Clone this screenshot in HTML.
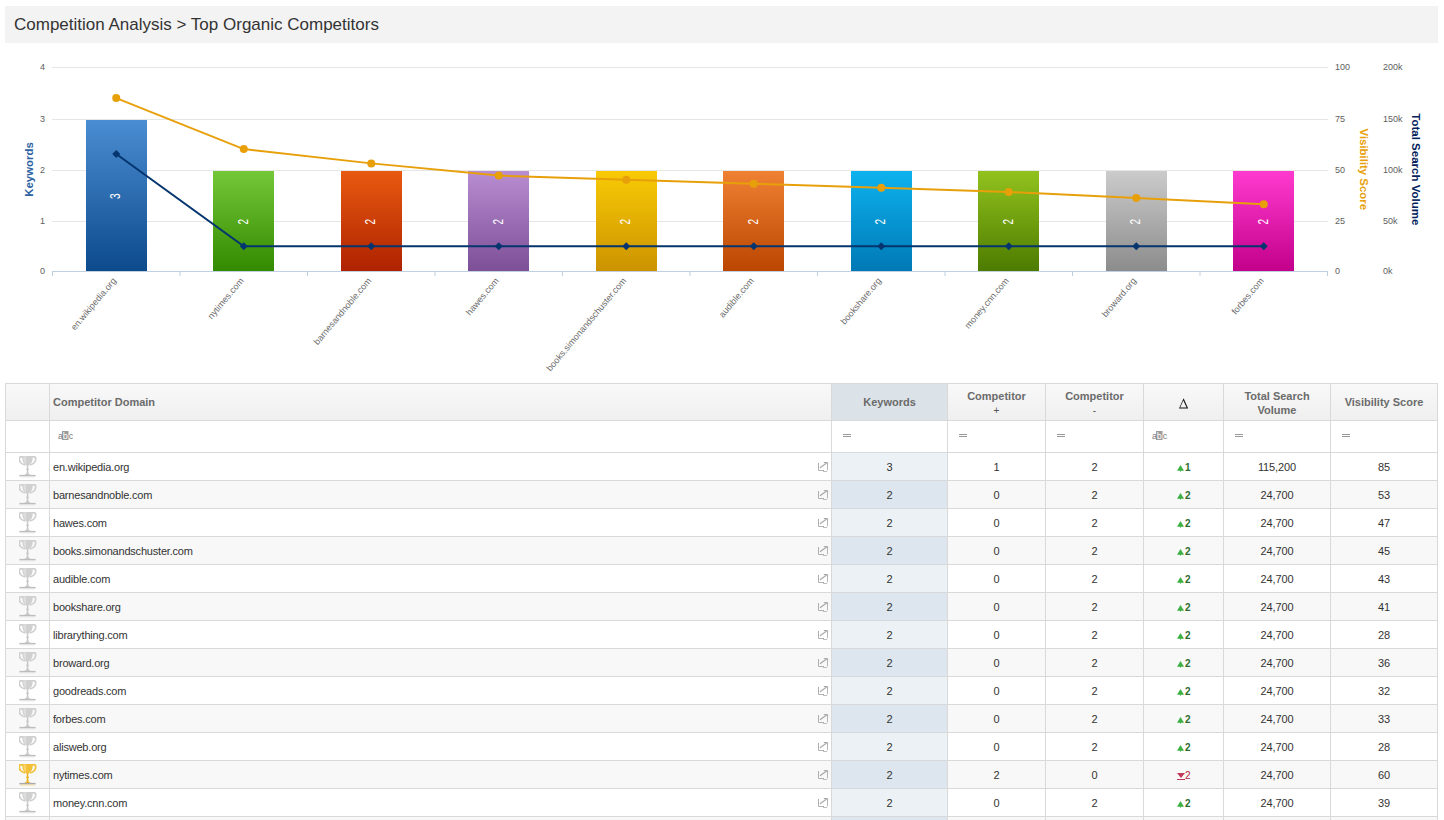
<!DOCTYPE html>
<html><head><meta charset="utf-8"><style>
html,body{margin:0;padding:0;background:#fff;width:1444px;height:820px;overflow:hidden;position:relative;font-family:"Liberation Sans",sans-serif}
svg text{font-family:"Liberation Sans",sans-serif}
</style></head><body>
<div style="position:absolute;left:5px;top:6px;width:1433px;height:37px;background:#f3f3f3"></div>
<div style="position:absolute;left:14px;top:15px;font-size:17px;color:#333;line-height:20px;white-space:nowrap">Competition Analysis &gt; Top Organic Competitors</div>
<svg width="1444" height="380" viewBox="0 0 1444 380" style="position:absolute;left:0;top:0">
<defs>
<linearGradient id="g0" x1="0" y1="0" x2="0" y2="1"><stop offset="0" stop-color="#4b8dd2"/><stop offset="1" stop-color="#0c4a8c"/></linearGradient>
<linearGradient id="g1" x1="0" y1="0" x2="0" y2="1"><stop offset="0" stop-color="#74c738"/><stop offset="1" stop-color="#338a00"/></linearGradient>
<linearGradient id="g2" x1="0" y1="0" x2="0" y2="1"><stop offset="0" stop-color="#e85a10"/><stop offset="1" stop-color="#ae2200"/></linearGradient>
<linearGradient id="g3" x1="0" y1="0" x2="0" y2="1"><stop offset="0" stop-color="#b98dd2"/><stop offset="1" stop-color="#7c4f96"/></linearGradient>
<linearGradient id="g4" x1="0" y1="0" x2="0" y2="1"><stop offset="0" stop-color="#f8ca06"/><stop offset="1" stop-color="#cc9300"/></linearGradient>
<linearGradient id="g5" x1="0" y1="0" x2="0" y2="1"><stop offset="0" stop-color="#ef8133"/><stop offset="1" stop-color="#bb4600"/></linearGradient>
<linearGradient id="g6" x1="0" y1="0" x2="0" y2="1"><stop offset="0" stop-color="#0db2ee"/><stop offset="1" stop-color="#0079b6"/></linearGradient>
<linearGradient id="g7" x1="0" y1="0" x2="0" y2="1"><stop offset="0" stop-color="#92c21e"/><stop offset="1" stop-color="#4d7b00"/></linearGradient>
<linearGradient id="g8" x1="0" y1="0" x2="0" y2="1"><stop offset="0" stop-color="#cbcbcb"/><stop offset="1" stop-color="#8c8c8c"/></linearGradient>
<linearGradient id="g9" x1="0" y1="0" x2="0" y2="1"><stop offset="0" stop-color="#ff3bcf"/><stop offset="1" stop-color="#c2008a"/></linearGradient>
</defs>
<rect x="52" y="67.0" width="1276" height="1" fill="#e6e6e6"/>
<rect x="52" y="119.0" width="1276" height="1" fill="#e6e6e6"/>
<rect x="52" y="170.0" width="1276" height="1" fill="#e6e6e6"/>
<rect x="52" y="221.0" width="1276" height="1" fill="#e6e6e6"/>
<text x="45" y="69.7" text-anchor="end" font-size="9" fill="#606060">4</text>
<text x="45" y="121.7" text-anchor="end" font-size="9" fill="#606060">3</text>
<text x="45" y="172.7" text-anchor="end" font-size="9" fill="#606060">2</text>
<text x="45" y="223.7" text-anchor="end" font-size="9" fill="#606060">1</text>
<text x="45" y="273.7" text-anchor="end" font-size="9" fill="#606060">0</text>
<text x="1335" y="69.7" font-size="9" fill="#606060">100</text>
<text x="1335" y="121.7" font-size="9" fill="#606060">75</text>
<text x="1335" y="172.7" font-size="9" fill="#606060">50</text>
<text x="1335" y="223.7" font-size="9" fill="#606060">25</text>
<text x="1335" y="273.7" font-size="9" fill="#606060">0</text>
<text x="1383" y="69.7" font-size="9" fill="#606060">200k</text>
<text x="1383" y="121.7" font-size="9" fill="#606060">150k</text>
<text x="1383" y="172.7" font-size="9" fill="#606060">100k</text>
<text x="1383" y="223.7" font-size="9" fill="#606060">50k</text>
<text x="1383" y="273.7" font-size="9" fill="#606060">0k</text>
<text transform="translate(33,169.5) rotate(-90)" text-anchor="middle" font-size="11.4" font-weight="bold" fill="#2c62a3">Keywords</text>
<text transform="translate(1359.5,169.3) rotate(90)" text-anchor="middle" font-size="11.4" font-weight="bold" fill="#e8a00a">Visibility Score</text>
<text transform="translate(1412,169.3) rotate(90)" text-anchor="middle" font-size="11.5" font-weight="bold" fill="#03225c">Total Search Volume</text>
<rect x="86" y="120" width="61" height="151" fill="url(#g0)"/>
<rect x="213" y="171" width="61" height="100" fill="url(#g1)"/>
<rect x="341" y="171" width="61" height="100" fill="url(#g2)"/>
<rect x="468" y="171" width="61" height="100" fill="url(#g3)"/>
<rect x="596" y="171" width="61" height="100" fill="url(#g4)"/>
<rect x="723" y="171" width="61" height="100" fill="url(#g5)"/>
<rect x="851" y="171" width="61" height="100" fill="url(#g6)"/>
<rect x="978" y="171" width="61" height="100" fill="url(#g7)"/>
<rect x="1106" y="171" width="61" height="100" fill="url(#g8)"/>
<rect x="1233" y="171" width="61" height="100" fill="url(#g9)"/>
<rect x="52" y="271" width="1276" height="1" fill="#c0d0e0"/>
<rect x="52.00" y="271" width="1" height="5" fill="#c0d0e0"/>
<rect x="179.50" y="271" width="1" height="5" fill="#c0d0e0"/>
<rect x="307.00" y="271" width="1" height="5" fill="#c0d0e0"/>
<rect x="434.50" y="271" width="1" height="5" fill="#c0d0e0"/>
<rect x="562.00" y="271" width="1" height="5" fill="#c0d0e0"/>
<rect x="689.50" y="271" width="1" height="5" fill="#c0d0e0"/>
<rect x="817.00" y="271" width="1" height="5" fill="#c0d0e0"/>
<rect x="944.50" y="271" width="1" height="5" fill="#c0d0e0"/>
<rect x="1072.00" y="271" width="1" height="5" fill="#c0d0e0"/>
<rect x="1199.50" y="271" width="1" height="5" fill="#c0d0e0"/>
<rect x="1327.00" y="271" width="1" height="5" fill="#c0d0e0"/>
<text transform="translate(120.25,196.2) rotate(-90) scale(0.72,1)" text-anchor="middle" font-size="14" fill="#ffffff">3</text>
<text transform="translate(247.75,221.7) rotate(-90) scale(0.72,1)" text-anchor="middle" font-size="14" fill="#ffffff">2</text>
<text transform="translate(375.25,221.7) rotate(-90) scale(0.72,1)" text-anchor="middle" font-size="14" fill="#ffffff">2</text>
<text transform="translate(502.75,221.7) rotate(-90) scale(0.72,1)" text-anchor="middle" font-size="14" fill="#ffffff">2</text>
<text transform="translate(630.25,221.7) rotate(-90) scale(0.72,1)" text-anchor="middle" font-size="14" fill="#ffffff">2</text>
<text transform="translate(757.75,221.7) rotate(-90) scale(0.72,1)" text-anchor="middle" font-size="14" fill="#ffffff">2</text>
<text transform="translate(885.25,221.7) rotate(-90) scale(0.72,1)" text-anchor="middle" font-size="14" fill="#ffffff">2</text>
<text transform="translate(1012.75,221.7) rotate(-90) scale(0.72,1)" text-anchor="middle" font-size="14" fill="#ffffff">2</text>
<text transform="translate(1140.25,221.7) rotate(-90) scale(0.72,1)" text-anchor="middle" font-size="14" fill="#ffffff">2</text>
<text transform="translate(1267.75,221.7) rotate(-90) scale(0.72,1)" text-anchor="middle" font-size="14" fill="#ffffff">2</text>
<text transform="translate(116.75,281) rotate(-50)" text-anchor="end" font-size="9" fill="#6a6a6a">en.wikipedia.org</text>
<text transform="translate(244.25,281) rotate(-50)" text-anchor="end" font-size="9" fill="#6a6a6a">nytimes.com</text>
<text transform="translate(371.75,281) rotate(-50)" text-anchor="end" font-size="9" fill="#6a6a6a">barnesandnoble.com</text>
<text transform="translate(499.25,281) rotate(-50)" text-anchor="end" font-size="9" fill="#6a6a6a">hawes.com</text>
<text transform="translate(626.75,281) rotate(-50)" text-anchor="end" font-size="9" fill="#6a6a6a">books.simonandschuster.com</text>
<text transform="translate(754.25,281) rotate(-50)" text-anchor="end" font-size="9" fill="#6a6a6a">audible.com</text>
<text transform="translate(881.75,281) rotate(-50)" text-anchor="end" font-size="9" fill="#6a6a6a">bookshare.org</text>
<text transform="translate(1009.25,281) rotate(-50)" text-anchor="end" font-size="9" fill="#6a6a6a">money.cnn.com</text>
<text transform="translate(1136.75,281) rotate(-50)" text-anchor="end" font-size="9" fill="#6a6a6a">broward.org</text>
<text transform="translate(1264.25,281) rotate(-50)" text-anchor="end" font-size="9" fill="#6a6a6a">forbes.com</text>
<polyline points="116.25,98.10 243.75,149.10 371.25,163.38 498.75,175.62 626.25,179.70 753.75,183.78 881.25,187.86 1008.75,191.94 1136.25,198.06 1263.75,204.18" fill="none" stroke="#e8a00a" stroke-width="2"/>
<circle cx="116.25" cy="98.10" r="4" fill="#e8a00a"/>
<circle cx="243.75" cy="149.10" r="4" fill="#e8a00a"/>
<circle cx="371.25" cy="163.38" r="4" fill="#e8a00a"/>
<circle cx="498.75" cy="175.62" r="4" fill="#e8a00a"/>
<circle cx="626.25" cy="179.70" r="4" fill="#e8a00a"/>
<circle cx="753.75" cy="183.78" r="4" fill="#e8a00a"/>
<circle cx="881.25" cy="187.86" r="4" fill="#e8a00a"/>
<circle cx="1008.75" cy="191.94" r="4" fill="#e8a00a"/>
<circle cx="1136.25" cy="198.06" r="4" fill="#e8a00a"/>
<circle cx="1263.75" cy="204.18" r="4" fill="#e8a00a"/>
<polyline points="116.25,154.00 243.75,246.31 371.25,246.31 498.75,246.31 626.25,246.31 753.75,246.31 881.25,246.31 1008.75,246.31 1136.25,246.31 1263.75,246.31" fill="none" stroke="#04356e" stroke-width="2"/>
<path d="M116.25 150.00 L120.25 154.00 L116.25 158.00 L112.25 154.00Z" fill="#04356e"/>
<path d="M243.75 242.31 L247.75 246.31 L243.75 250.31 L239.75 246.31Z" fill="#04356e"/>
<path d="M371.25 242.31 L375.25 246.31 L371.25 250.31 L367.25 246.31Z" fill="#04356e"/>
<path d="M498.75 242.31 L502.75 246.31 L498.75 250.31 L494.75 246.31Z" fill="#04356e"/>
<path d="M626.25 242.31 L630.25 246.31 L626.25 250.31 L622.25 246.31Z" fill="#04356e"/>
<path d="M753.75 242.31 L757.75 246.31 L753.75 250.31 L749.75 246.31Z" fill="#04356e"/>
<path d="M881.25 242.31 L885.25 246.31 L881.25 250.31 L877.25 246.31Z" fill="#04356e"/>
<path d="M1008.75 242.31 L1012.75 246.31 L1008.75 250.31 L1004.75 246.31Z" fill="#04356e"/>
<path d="M1136.25 242.31 L1140.25 246.31 L1136.25 250.31 L1132.25 246.31Z" fill="#04356e"/>
<path d="M1263.75 242.31 L1267.75 246.31 L1263.75 250.31 L1259.75 246.31Z" fill="#04356e"/>
</svg>
<div style="position:absolute;left:5px;top:383px;width:1432px;height:37px;background:linear-gradient(#f9f9f9,#efefef)"></div>
<div style="position:absolute;left:831px;top:383px;width:116px;height:37px;background:#dce3e8"></div>
<div style="position:absolute;left:5px;top:420px;width:1432px;height:32px;background:#fff"></div>
<div style="position:absolute;left:5px;top:452px;width:1432px;height:28px;background:#ffffff"></div>
<div style="position:absolute;left:831px;top:452px;width:116px;height:28px;background:#ecf1f5"></div>
<div style="position:absolute;left:5px;top:480px;width:1432px;height:28px;background:#f8f8f8"></div>
<div style="position:absolute;left:831px;top:480px;width:116px;height:28px;background:#dde6ee"></div>
<div style="position:absolute;left:5px;top:508px;width:1432px;height:28px;background:#ffffff"></div>
<div style="position:absolute;left:831px;top:508px;width:116px;height:28px;background:#ecf1f5"></div>
<div style="position:absolute;left:5px;top:536px;width:1432px;height:28px;background:#f8f8f8"></div>
<div style="position:absolute;left:831px;top:536px;width:116px;height:28px;background:#dde6ee"></div>
<div style="position:absolute;left:5px;top:564px;width:1432px;height:28px;background:#ffffff"></div>
<div style="position:absolute;left:831px;top:564px;width:116px;height:28px;background:#ecf1f5"></div>
<div style="position:absolute;left:5px;top:592px;width:1432px;height:28px;background:#f8f8f8"></div>
<div style="position:absolute;left:831px;top:592px;width:116px;height:28px;background:#dde6ee"></div>
<div style="position:absolute;left:5px;top:620px;width:1432px;height:28px;background:#ffffff"></div>
<div style="position:absolute;left:831px;top:620px;width:116px;height:28px;background:#ecf1f5"></div>
<div style="position:absolute;left:5px;top:648px;width:1432px;height:28px;background:#f8f8f8"></div>
<div style="position:absolute;left:831px;top:648px;width:116px;height:28px;background:#dde6ee"></div>
<div style="position:absolute;left:5px;top:676px;width:1432px;height:28px;background:#ffffff"></div>
<div style="position:absolute;left:831px;top:676px;width:116px;height:28px;background:#ecf1f5"></div>
<div style="position:absolute;left:5px;top:704px;width:1432px;height:28px;background:#f8f8f8"></div>
<div style="position:absolute;left:831px;top:704px;width:116px;height:28px;background:#dde6ee"></div>
<div style="position:absolute;left:5px;top:732px;width:1432px;height:28px;background:#ffffff"></div>
<div style="position:absolute;left:831px;top:732px;width:116px;height:28px;background:#ecf1f5"></div>
<div style="position:absolute;left:5px;top:760px;width:1432px;height:28px;background:#f8f8f8"></div>
<div style="position:absolute;left:831px;top:760px;width:116px;height:28px;background:#dde6ee"></div>
<div style="position:absolute;left:5px;top:788px;width:1432px;height:28px;background:#ffffff"></div>
<div style="position:absolute;left:831px;top:788px;width:116px;height:28px;background:#ecf1f5"></div>
<div style="position:absolute;left:5px;top:816px;width:1432px;height:28px;background:#f8f8f8"></div>
<div style="position:absolute;left:831px;top:816px;width:116px;height:28px;background:#dde6ee"></div>
<div style="position:absolute;left:5px;top:383px;width:1433px;height:1px;background:#d9d9d9"></div>
<div style="position:absolute;left:5px;top:420px;width:1433px;height:1px;background:#d9d9d9"></div>
<div style="position:absolute;left:5px;top:452px;width:1433px;height:1px;background:#d9d9d9"></div>
<div style="position:absolute;left:5px;top:480px;width:1433px;height:1px;background:#d9d9d9"></div>
<div style="position:absolute;left:5px;top:508px;width:1433px;height:1px;background:#d9d9d9"></div>
<div style="position:absolute;left:5px;top:536px;width:1433px;height:1px;background:#d9d9d9"></div>
<div style="position:absolute;left:5px;top:564px;width:1433px;height:1px;background:#d9d9d9"></div>
<div style="position:absolute;left:5px;top:592px;width:1433px;height:1px;background:#d9d9d9"></div>
<div style="position:absolute;left:5px;top:620px;width:1433px;height:1px;background:#d9d9d9"></div>
<div style="position:absolute;left:5px;top:648px;width:1433px;height:1px;background:#d9d9d9"></div>
<div style="position:absolute;left:5px;top:676px;width:1433px;height:1px;background:#d9d9d9"></div>
<div style="position:absolute;left:5px;top:704px;width:1433px;height:1px;background:#d9d9d9"></div>
<div style="position:absolute;left:5px;top:732px;width:1433px;height:1px;background:#d9d9d9"></div>
<div style="position:absolute;left:5px;top:760px;width:1433px;height:1px;background:#d9d9d9"></div>
<div style="position:absolute;left:5px;top:788px;width:1433px;height:1px;background:#d9d9d9"></div>
<div style="position:absolute;left:5px;top:816px;width:1433px;height:1px;background:#d9d9d9"></div>
<div style="position:absolute;left:5px;top:383px;width:1px;height:437px;background:#d9d9d9"></div>
<div style="position:absolute;left:49px;top:383px;width:1px;height:437px;background:#d9d9d9"></div>
<div style="position:absolute;left:831px;top:383px;width:1px;height:437px;background:#d9d9d9"></div>
<div style="position:absolute;left:947px;top:383px;width:1px;height:437px;background:#d9d9d9"></div>
<div style="position:absolute;left:1045px;top:383px;width:1px;height:437px;background:#d9d9d9"></div>
<div style="position:absolute;left:1143px;top:383px;width:1px;height:437px;background:#d9d9d9"></div>
<div style="position:absolute;left:1223px;top:383px;width:1px;height:437px;background:#d9d9d9"></div>
<div style="position:absolute;left:1330px;top:383px;width:1px;height:437px;background:#d9d9d9"></div>
<div style="position:absolute;left:1437px;top:383px;width:1px;height:437px;background:#d9d9d9"></div>
<div style="position:absolute;left:53px;top:395px;white-space:nowrap;font-size:11px;font-weight:bold;color:#6b6b6b;line-height:14px">Competitor Domain</div>
<div style="position:absolute;left:832px;top:395px;width:115px;text-align:center;white-space:nowrap;font-size:11px;font-weight:bold;color:#6b6b6b;line-height:14px">Keywords</div>
<div style="position:absolute;left:948px;top:389px;width:97px;text-align:center;white-space:nowrap;font-size:11px;font-weight:bold;color:#6b6b6b;line-height:14px">Competitor<br><span style='font-weight:normal;color:#555;font-size:10px'>+</span></div>
<div style="position:absolute;left:1046px;top:389px;width:97px;text-align:center;white-space:nowrap;font-size:11px;font-weight:bold;color:#6b6b6b;line-height:14px">Competitor<br><span style='font-weight:normal;color:#555;font-size:10px'>-</span></div>
<svg style="position:absolute;left:1179px;top:398px" width="10" height="11" viewBox="0 0 10 11"><path d="M4.6 0.3 L9.2 10.5 H0 Z M4.3 2.6 L1.2 9.4 H7.6 Z" fill="#111" fill-rule="evenodd"/></svg>
<div style="position:absolute;left:1224px;top:389px;width:106px;text-align:center;white-space:nowrap;font-size:11px;font-weight:bold;color:#6b6b6b;line-height:14px">Total Search<br>Volume</div>
<div style="position:absolute;left:1331px;top:395px;width:106px;text-align:center;white-space:nowrap;font-size:11px;font-weight:bold;color:#6b6b6b;line-height:14px">Visibility Score</div>
<svg style="position:absolute;left:58px;top:429px" width="16" height="13" viewBox="0 0 16 13"><rect x="4" y="2" width="6.5" height="9" fill="#9c9c9c"/><text x="0" y="9.8" font-size="9" fill="#7a7a7a">a</text><text x="4.7" y="9.8" font-size="9" fill="#ffffff">b</text><text x="10.8" y="9.8" font-size="9" fill="#7a7a7a">c</text></svg>
<div style="position:absolute;left:843px;top:434px;width:8px;height:1px;background:#999"></div><div style="position:absolute;left:843px;top:436px;width:8px;height:1px;background:#999"></div>
<div style="position:absolute;left:959px;top:434px;width:8px;height:1px;background:#999"></div><div style="position:absolute;left:959px;top:436px;width:8px;height:1px;background:#999"></div>
<div style="position:absolute;left:1057px;top:434px;width:8px;height:1px;background:#999"></div><div style="position:absolute;left:1057px;top:436px;width:8px;height:1px;background:#999"></div>
<div style="position:absolute;left:1235px;top:434px;width:8px;height:1px;background:#999"></div><div style="position:absolute;left:1235px;top:436px;width:8px;height:1px;background:#999"></div>
<div style="position:absolute;left:1342px;top:434px;width:8px;height:1px;background:#999"></div><div style="position:absolute;left:1342px;top:436px;width:8px;height:1px;background:#999"></div>
<svg style="position:absolute;left:1152px;top:429px" width="16" height="13" viewBox="0 0 16 13"><rect x="4" y="2" width="6.5" height="9" fill="#9c9c9c"/><text x="0" y="9.8" font-size="9" fill="#7a7a7a">a</text><text x="4.7" y="9.8" font-size="9" fill="#ffffff">b</text><text x="10.8" y="9.8" font-size="9" fill="#7a7a7a">c</text></svg>
<svg style="position:absolute;left:19px;top:456px" width="18" height="23" viewBox="0 0 18 23"><path d="M4 0.9 H1.2 C0 0.9 0 4.5 1.5 6.5 C2.8 8 4.5 8.5 6.2 9" fill="none" stroke="#d0d0d0" stroke-width="1.8"/><path d="M13 0.9 H15.8 C17 0.9 17 4.5 15.5 6.5 C14.2 8 12.5 8.5 10.8 9" fill="none" stroke="#d0d0d0" stroke-width="1.8"/><path d="M3.4 0 H13.6 V3 C13.6 6.5 11 8.4 9.6 9.2 V9.8 H7.4 V9.2 C6 8.4 3.4 6.5 3.4 3Z" fill="#d0d0d0"/><path d="M4.6 0.5 H7.2 V8 C5.6 6.8 4.6 5 4.6 3.2Z" fill="#dedede"/><rect x="7.8" y="9" width="1.5" height="8" fill="#c8c8c8"/><rect x="7" y="12.8" width="3" height="0.9" fill="#c8c8c8"/><path d="M7.8 16.2 C7.8 18 6 18.8 4.8 19 H12.2 C11 18.8 9.3 18 9.3 16.2Z" fill="#c8c8c8"/><rect x="0.4" y="18.9" width="16.2" height="1.5" fill="#bdbdbd"/><rect x="1.5" y="20.6" width="14" height="0.8" fill="#e6e6e6"/></svg>
<div style="position:absolute;left:53px;top:460px;white-space:nowrap;font-size:11px;color:#333;line-height:14px;letter-spacing:-0.1px;letter-spacing:-0.2px">en.wikipedia.org</div>
<svg style="position:absolute;left:818px;top:462px" width="11" height="11" viewBox="0 0 11 11"><path d="M0.5 1 V8.5 H6" fill="none" stroke="#b0b0b0" stroke-width="1"/><path d="M5 9.5 H9" fill="none" stroke="#bcbcbc" stroke-width="1"/><path d="M9.5 1.8 V8.5" fill="none" stroke="#b8b8b8" stroke-width="1"/><path d="M2 5.8 L8.6 0.9" stroke="#aaaaaa" stroke-width="1.3"/><path d="M5.8 0.5 H9.6 V3" fill="none" stroke="#aaaaaa" stroke-width="1"/></svg>
<div style="position:absolute;left:832px;top:460px;width:115px;text-align:center;white-space:nowrap;font-size:11px;color:#333;line-height:14px;letter-spacing:-0.1px">3</div>
<div style="position:absolute;left:948px;top:460px;width:97px;text-align:center;white-space:nowrap;font-size:11px;color:#333;line-height:14px;letter-spacing:-0.1px">1</div>
<div style="position:absolute;left:1046px;top:460px;width:97px;text-align:center;white-space:nowrap;font-size:11px;color:#333;line-height:14px;letter-spacing:-0.1px">2</div>
<svg style="position:absolute;left:1177px;top:465px" width="8" height="7" viewBox="0 0 8 7"><path d="M0 5.7 L3.5 0 L7 5.7Z" fill="#3cb043"/><rect x="3" y="5" width="1" height="1.5" fill="#3cb043"/></svg>
<div style="position:absolute;left:1185px;top:461px;white-space:nowrap;font-size:10px;font-weight:bold;color:#2d6b2d;line-height:14px">1</div>
<div style="position:absolute;left:1224px;top:460px;width:106px;text-align:center;white-space:nowrap;font-size:11px;color:#333;line-height:14px;letter-spacing:-0.1px">115,200</div>
<div style="position:absolute;left:1331px;top:460px;width:106px;text-align:center;white-space:nowrap;font-size:11px;color:#333;line-height:14px;letter-spacing:-0.1px">85</div>
<svg style="position:absolute;left:19px;top:484px" width="18" height="23" viewBox="0 0 18 23"><path d="M4 0.9 H1.2 C0 0.9 0 4.5 1.5 6.5 C2.8 8 4.5 8.5 6.2 9" fill="none" stroke="#d0d0d0" stroke-width="1.8"/><path d="M13 0.9 H15.8 C17 0.9 17 4.5 15.5 6.5 C14.2 8 12.5 8.5 10.8 9" fill="none" stroke="#d0d0d0" stroke-width="1.8"/><path d="M3.4 0 H13.6 V3 C13.6 6.5 11 8.4 9.6 9.2 V9.8 H7.4 V9.2 C6 8.4 3.4 6.5 3.4 3Z" fill="#d0d0d0"/><path d="M4.6 0.5 H7.2 V8 C5.6 6.8 4.6 5 4.6 3.2Z" fill="#dedede"/><rect x="7.8" y="9" width="1.5" height="8" fill="#c8c8c8"/><rect x="7" y="12.8" width="3" height="0.9" fill="#c8c8c8"/><path d="M7.8 16.2 C7.8 18 6 18.8 4.8 19 H12.2 C11 18.8 9.3 18 9.3 16.2Z" fill="#c8c8c8"/><rect x="0.4" y="18.9" width="16.2" height="1.5" fill="#bdbdbd"/><rect x="1.5" y="20.6" width="14" height="0.8" fill="#e6e6e6"/></svg>
<div style="position:absolute;left:53px;top:488px;white-space:nowrap;font-size:11px;color:#333;line-height:14px;letter-spacing:-0.1px;letter-spacing:-0.2px">barnesandnoble.com</div>
<svg style="position:absolute;left:818px;top:490px" width="11" height="11" viewBox="0 0 11 11"><path d="M0.5 1 V8.5 H6" fill="none" stroke="#b0b0b0" stroke-width="1"/><path d="M5 9.5 H9" fill="none" stroke="#bcbcbc" stroke-width="1"/><path d="M9.5 1.8 V8.5" fill="none" stroke="#b8b8b8" stroke-width="1"/><path d="M2 5.8 L8.6 0.9" stroke="#aaaaaa" stroke-width="1.3"/><path d="M5.8 0.5 H9.6 V3" fill="none" stroke="#aaaaaa" stroke-width="1"/></svg>
<div style="position:absolute;left:832px;top:488px;width:115px;text-align:center;white-space:nowrap;font-size:11px;color:#333;line-height:14px;letter-spacing:-0.1px">2</div>
<div style="position:absolute;left:948px;top:488px;width:97px;text-align:center;white-space:nowrap;font-size:11px;color:#333;line-height:14px;letter-spacing:-0.1px">0</div>
<div style="position:absolute;left:1046px;top:488px;width:97px;text-align:center;white-space:nowrap;font-size:11px;color:#333;line-height:14px;letter-spacing:-0.1px">2</div>
<svg style="position:absolute;left:1177px;top:493px" width="8" height="7" viewBox="0 0 8 7"><path d="M0 5.7 L3.5 0 L7 5.7Z" fill="#3cb043"/><rect x="3" y="5" width="1" height="1.5" fill="#3cb043"/></svg>
<div style="position:absolute;left:1185px;top:489px;white-space:nowrap;font-size:10px;font-weight:bold;color:#2d6b2d;line-height:14px">2</div>
<div style="position:absolute;left:1224px;top:488px;width:106px;text-align:center;white-space:nowrap;font-size:11px;color:#333;line-height:14px;letter-spacing:-0.1px">24,700</div>
<div style="position:absolute;left:1331px;top:488px;width:106px;text-align:center;white-space:nowrap;font-size:11px;color:#333;line-height:14px;letter-spacing:-0.1px">53</div>
<svg style="position:absolute;left:19px;top:512px" width="18" height="23" viewBox="0 0 18 23"><path d="M4 0.9 H1.2 C0 0.9 0 4.5 1.5 6.5 C2.8 8 4.5 8.5 6.2 9" fill="none" stroke="#d0d0d0" stroke-width="1.8"/><path d="M13 0.9 H15.8 C17 0.9 17 4.5 15.5 6.5 C14.2 8 12.5 8.5 10.8 9" fill="none" stroke="#d0d0d0" stroke-width="1.8"/><path d="M3.4 0 H13.6 V3 C13.6 6.5 11 8.4 9.6 9.2 V9.8 H7.4 V9.2 C6 8.4 3.4 6.5 3.4 3Z" fill="#d0d0d0"/><path d="M4.6 0.5 H7.2 V8 C5.6 6.8 4.6 5 4.6 3.2Z" fill="#dedede"/><rect x="7.8" y="9" width="1.5" height="8" fill="#c8c8c8"/><rect x="7" y="12.8" width="3" height="0.9" fill="#c8c8c8"/><path d="M7.8 16.2 C7.8 18 6 18.8 4.8 19 H12.2 C11 18.8 9.3 18 9.3 16.2Z" fill="#c8c8c8"/><rect x="0.4" y="18.9" width="16.2" height="1.5" fill="#bdbdbd"/><rect x="1.5" y="20.6" width="14" height="0.8" fill="#e6e6e6"/></svg>
<div style="position:absolute;left:53px;top:516px;white-space:nowrap;font-size:11px;color:#333;line-height:14px;letter-spacing:-0.1px;letter-spacing:-0.2px">hawes.com</div>
<svg style="position:absolute;left:818px;top:518px" width="11" height="11" viewBox="0 0 11 11"><path d="M0.5 1 V8.5 H6" fill="none" stroke="#b0b0b0" stroke-width="1"/><path d="M5 9.5 H9" fill="none" stroke="#bcbcbc" stroke-width="1"/><path d="M9.5 1.8 V8.5" fill="none" stroke="#b8b8b8" stroke-width="1"/><path d="M2 5.8 L8.6 0.9" stroke="#aaaaaa" stroke-width="1.3"/><path d="M5.8 0.5 H9.6 V3" fill="none" stroke="#aaaaaa" stroke-width="1"/></svg>
<div style="position:absolute;left:832px;top:516px;width:115px;text-align:center;white-space:nowrap;font-size:11px;color:#333;line-height:14px;letter-spacing:-0.1px">2</div>
<div style="position:absolute;left:948px;top:516px;width:97px;text-align:center;white-space:nowrap;font-size:11px;color:#333;line-height:14px;letter-spacing:-0.1px">0</div>
<div style="position:absolute;left:1046px;top:516px;width:97px;text-align:center;white-space:nowrap;font-size:11px;color:#333;line-height:14px;letter-spacing:-0.1px">2</div>
<svg style="position:absolute;left:1177px;top:521px" width="8" height="7" viewBox="0 0 8 7"><path d="M0 5.7 L3.5 0 L7 5.7Z" fill="#3cb043"/><rect x="3" y="5" width="1" height="1.5" fill="#3cb043"/></svg>
<div style="position:absolute;left:1185px;top:517px;white-space:nowrap;font-size:10px;font-weight:bold;color:#2d6b2d;line-height:14px">2</div>
<div style="position:absolute;left:1224px;top:516px;width:106px;text-align:center;white-space:nowrap;font-size:11px;color:#333;line-height:14px;letter-spacing:-0.1px">24,700</div>
<div style="position:absolute;left:1331px;top:516px;width:106px;text-align:center;white-space:nowrap;font-size:11px;color:#333;line-height:14px;letter-spacing:-0.1px">47</div>
<svg style="position:absolute;left:19px;top:540px" width="18" height="23" viewBox="0 0 18 23"><path d="M4 0.9 H1.2 C0 0.9 0 4.5 1.5 6.5 C2.8 8 4.5 8.5 6.2 9" fill="none" stroke="#d0d0d0" stroke-width="1.8"/><path d="M13 0.9 H15.8 C17 0.9 17 4.5 15.5 6.5 C14.2 8 12.5 8.5 10.8 9" fill="none" stroke="#d0d0d0" stroke-width="1.8"/><path d="M3.4 0 H13.6 V3 C13.6 6.5 11 8.4 9.6 9.2 V9.8 H7.4 V9.2 C6 8.4 3.4 6.5 3.4 3Z" fill="#d0d0d0"/><path d="M4.6 0.5 H7.2 V8 C5.6 6.8 4.6 5 4.6 3.2Z" fill="#dedede"/><rect x="7.8" y="9" width="1.5" height="8" fill="#c8c8c8"/><rect x="7" y="12.8" width="3" height="0.9" fill="#c8c8c8"/><path d="M7.8 16.2 C7.8 18 6 18.8 4.8 19 H12.2 C11 18.8 9.3 18 9.3 16.2Z" fill="#c8c8c8"/><rect x="0.4" y="18.9" width="16.2" height="1.5" fill="#bdbdbd"/><rect x="1.5" y="20.6" width="14" height="0.8" fill="#e6e6e6"/></svg>
<div style="position:absolute;left:53px;top:544px;white-space:nowrap;font-size:11px;color:#333;line-height:14px;letter-spacing:-0.1px;letter-spacing:-0.2px">books.simonandschuster.com</div>
<svg style="position:absolute;left:818px;top:546px" width="11" height="11" viewBox="0 0 11 11"><path d="M0.5 1 V8.5 H6" fill="none" stroke="#b0b0b0" stroke-width="1"/><path d="M5 9.5 H9" fill="none" stroke="#bcbcbc" stroke-width="1"/><path d="M9.5 1.8 V8.5" fill="none" stroke="#b8b8b8" stroke-width="1"/><path d="M2 5.8 L8.6 0.9" stroke="#aaaaaa" stroke-width="1.3"/><path d="M5.8 0.5 H9.6 V3" fill="none" stroke="#aaaaaa" stroke-width="1"/></svg>
<div style="position:absolute;left:832px;top:544px;width:115px;text-align:center;white-space:nowrap;font-size:11px;color:#333;line-height:14px;letter-spacing:-0.1px">2</div>
<div style="position:absolute;left:948px;top:544px;width:97px;text-align:center;white-space:nowrap;font-size:11px;color:#333;line-height:14px;letter-spacing:-0.1px">0</div>
<div style="position:absolute;left:1046px;top:544px;width:97px;text-align:center;white-space:nowrap;font-size:11px;color:#333;line-height:14px;letter-spacing:-0.1px">2</div>
<svg style="position:absolute;left:1177px;top:549px" width="8" height="7" viewBox="0 0 8 7"><path d="M0 5.7 L3.5 0 L7 5.7Z" fill="#3cb043"/><rect x="3" y="5" width="1" height="1.5" fill="#3cb043"/></svg>
<div style="position:absolute;left:1185px;top:545px;white-space:nowrap;font-size:10px;font-weight:bold;color:#2d6b2d;line-height:14px">2</div>
<div style="position:absolute;left:1224px;top:544px;width:106px;text-align:center;white-space:nowrap;font-size:11px;color:#333;line-height:14px;letter-spacing:-0.1px">24,700</div>
<div style="position:absolute;left:1331px;top:544px;width:106px;text-align:center;white-space:nowrap;font-size:11px;color:#333;line-height:14px;letter-spacing:-0.1px">45</div>
<svg style="position:absolute;left:19px;top:568px" width="18" height="23" viewBox="0 0 18 23"><path d="M4 0.9 H1.2 C0 0.9 0 4.5 1.5 6.5 C2.8 8 4.5 8.5 6.2 9" fill="none" stroke="#d0d0d0" stroke-width="1.8"/><path d="M13 0.9 H15.8 C17 0.9 17 4.5 15.5 6.5 C14.2 8 12.5 8.5 10.8 9" fill="none" stroke="#d0d0d0" stroke-width="1.8"/><path d="M3.4 0 H13.6 V3 C13.6 6.5 11 8.4 9.6 9.2 V9.8 H7.4 V9.2 C6 8.4 3.4 6.5 3.4 3Z" fill="#d0d0d0"/><path d="M4.6 0.5 H7.2 V8 C5.6 6.8 4.6 5 4.6 3.2Z" fill="#dedede"/><rect x="7.8" y="9" width="1.5" height="8" fill="#c8c8c8"/><rect x="7" y="12.8" width="3" height="0.9" fill="#c8c8c8"/><path d="M7.8 16.2 C7.8 18 6 18.8 4.8 19 H12.2 C11 18.8 9.3 18 9.3 16.2Z" fill="#c8c8c8"/><rect x="0.4" y="18.9" width="16.2" height="1.5" fill="#bdbdbd"/><rect x="1.5" y="20.6" width="14" height="0.8" fill="#e6e6e6"/></svg>
<div style="position:absolute;left:53px;top:572px;white-space:nowrap;font-size:11px;color:#333;line-height:14px;letter-spacing:-0.1px;letter-spacing:-0.2px">audible.com</div>
<svg style="position:absolute;left:818px;top:574px" width="11" height="11" viewBox="0 0 11 11"><path d="M0.5 1 V8.5 H6" fill="none" stroke="#b0b0b0" stroke-width="1"/><path d="M5 9.5 H9" fill="none" stroke="#bcbcbc" stroke-width="1"/><path d="M9.5 1.8 V8.5" fill="none" stroke="#b8b8b8" stroke-width="1"/><path d="M2 5.8 L8.6 0.9" stroke="#aaaaaa" stroke-width="1.3"/><path d="M5.8 0.5 H9.6 V3" fill="none" stroke="#aaaaaa" stroke-width="1"/></svg>
<div style="position:absolute;left:832px;top:572px;width:115px;text-align:center;white-space:nowrap;font-size:11px;color:#333;line-height:14px;letter-spacing:-0.1px">2</div>
<div style="position:absolute;left:948px;top:572px;width:97px;text-align:center;white-space:nowrap;font-size:11px;color:#333;line-height:14px;letter-spacing:-0.1px">0</div>
<div style="position:absolute;left:1046px;top:572px;width:97px;text-align:center;white-space:nowrap;font-size:11px;color:#333;line-height:14px;letter-spacing:-0.1px">2</div>
<svg style="position:absolute;left:1177px;top:577px" width="8" height="7" viewBox="0 0 8 7"><path d="M0 5.7 L3.5 0 L7 5.7Z" fill="#3cb043"/><rect x="3" y="5" width="1" height="1.5" fill="#3cb043"/></svg>
<div style="position:absolute;left:1185px;top:573px;white-space:nowrap;font-size:10px;font-weight:bold;color:#2d6b2d;line-height:14px">2</div>
<div style="position:absolute;left:1224px;top:572px;width:106px;text-align:center;white-space:nowrap;font-size:11px;color:#333;line-height:14px;letter-spacing:-0.1px">24,700</div>
<div style="position:absolute;left:1331px;top:572px;width:106px;text-align:center;white-space:nowrap;font-size:11px;color:#333;line-height:14px;letter-spacing:-0.1px">43</div>
<svg style="position:absolute;left:19px;top:596px" width="18" height="23" viewBox="0 0 18 23"><path d="M4 0.9 H1.2 C0 0.9 0 4.5 1.5 6.5 C2.8 8 4.5 8.5 6.2 9" fill="none" stroke="#d0d0d0" stroke-width="1.8"/><path d="M13 0.9 H15.8 C17 0.9 17 4.5 15.5 6.5 C14.2 8 12.5 8.5 10.8 9" fill="none" stroke="#d0d0d0" stroke-width="1.8"/><path d="M3.4 0 H13.6 V3 C13.6 6.5 11 8.4 9.6 9.2 V9.8 H7.4 V9.2 C6 8.4 3.4 6.5 3.4 3Z" fill="#d0d0d0"/><path d="M4.6 0.5 H7.2 V8 C5.6 6.8 4.6 5 4.6 3.2Z" fill="#dedede"/><rect x="7.8" y="9" width="1.5" height="8" fill="#c8c8c8"/><rect x="7" y="12.8" width="3" height="0.9" fill="#c8c8c8"/><path d="M7.8 16.2 C7.8 18 6 18.8 4.8 19 H12.2 C11 18.8 9.3 18 9.3 16.2Z" fill="#c8c8c8"/><rect x="0.4" y="18.9" width="16.2" height="1.5" fill="#bdbdbd"/><rect x="1.5" y="20.6" width="14" height="0.8" fill="#e6e6e6"/></svg>
<div style="position:absolute;left:53px;top:600px;white-space:nowrap;font-size:11px;color:#333;line-height:14px;letter-spacing:-0.1px;letter-spacing:-0.2px">bookshare.org</div>
<svg style="position:absolute;left:818px;top:602px" width="11" height="11" viewBox="0 0 11 11"><path d="M0.5 1 V8.5 H6" fill="none" stroke="#b0b0b0" stroke-width="1"/><path d="M5 9.5 H9" fill="none" stroke="#bcbcbc" stroke-width="1"/><path d="M9.5 1.8 V8.5" fill="none" stroke="#b8b8b8" stroke-width="1"/><path d="M2 5.8 L8.6 0.9" stroke="#aaaaaa" stroke-width="1.3"/><path d="M5.8 0.5 H9.6 V3" fill="none" stroke="#aaaaaa" stroke-width="1"/></svg>
<div style="position:absolute;left:832px;top:600px;width:115px;text-align:center;white-space:nowrap;font-size:11px;color:#333;line-height:14px;letter-spacing:-0.1px">2</div>
<div style="position:absolute;left:948px;top:600px;width:97px;text-align:center;white-space:nowrap;font-size:11px;color:#333;line-height:14px;letter-spacing:-0.1px">0</div>
<div style="position:absolute;left:1046px;top:600px;width:97px;text-align:center;white-space:nowrap;font-size:11px;color:#333;line-height:14px;letter-spacing:-0.1px">2</div>
<svg style="position:absolute;left:1177px;top:605px" width="8" height="7" viewBox="0 0 8 7"><path d="M0 5.7 L3.5 0 L7 5.7Z" fill="#3cb043"/><rect x="3" y="5" width="1" height="1.5" fill="#3cb043"/></svg>
<div style="position:absolute;left:1185px;top:601px;white-space:nowrap;font-size:10px;font-weight:bold;color:#2d6b2d;line-height:14px">2</div>
<div style="position:absolute;left:1224px;top:600px;width:106px;text-align:center;white-space:nowrap;font-size:11px;color:#333;line-height:14px;letter-spacing:-0.1px">24,700</div>
<div style="position:absolute;left:1331px;top:600px;width:106px;text-align:center;white-space:nowrap;font-size:11px;color:#333;line-height:14px;letter-spacing:-0.1px">41</div>
<svg style="position:absolute;left:19px;top:624px" width="18" height="23" viewBox="0 0 18 23"><path d="M4 0.9 H1.2 C0 0.9 0 4.5 1.5 6.5 C2.8 8 4.5 8.5 6.2 9" fill="none" stroke="#d0d0d0" stroke-width="1.8"/><path d="M13 0.9 H15.8 C17 0.9 17 4.5 15.5 6.5 C14.2 8 12.5 8.5 10.8 9" fill="none" stroke="#d0d0d0" stroke-width="1.8"/><path d="M3.4 0 H13.6 V3 C13.6 6.5 11 8.4 9.6 9.2 V9.8 H7.4 V9.2 C6 8.4 3.4 6.5 3.4 3Z" fill="#d0d0d0"/><path d="M4.6 0.5 H7.2 V8 C5.6 6.8 4.6 5 4.6 3.2Z" fill="#dedede"/><rect x="7.8" y="9" width="1.5" height="8" fill="#c8c8c8"/><rect x="7" y="12.8" width="3" height="0.9" fill="#c8c8c8"/><path d="M7.8 16.2 C7.8 18 6 18.8 4.8 19 H12.2 C11 18.8 9.3 18 9.3 16.2Z" fill="#c8c8c8"/><rect x="0.4" y="18.9" width="16.2" height="1.5" fill="#bdbdbd"/><rect x="1.5" y="20.6" width="14" height="0.8" fill="#e6e6e6"/></svg>
<div style="position:absolute;left:53px;top:628px;white-space:nowrap;font-size:11px;color:#333;line-height:14px;letter-spacing:-0.1px;letter-spacing:-0.2px">librarything.com</div>
<svg style="position:absolute;left:818px;top:630px" width="11" height="11" viewBox="0 0 11 11"><path d="M0.5 1 V8.5 H6" fill="none" stroke="#b0b0b0" stroke-width="1"/><path d="M5 9.5 H9" fill="none" stroke="#bcbcbc" stroke-width="1"/><path d="M9.5 1.8 V8.5" fill="none" stroke="#b8b8b8" stroke-width="1"/><path d="M2 5.8 L8.6 0.9" stroke="#aaaaaa" stroke-width="1.3"/><path d="M5.8 0.5 H9.6 V3" fill="none" stroke="#aaaaaa" stroke-width="1"/></svg>
<div style="position:absolute;left:832px;top:628px;width:115px;text-align:center;white-space:nowrap;font-size:11px;color:#333;line-height:14px;letter-spacing:-0.1px">2</div>
<div style="position:absolute;left:948px;top:628px;width:97px;text-align:center;white-space:nowrap;font-size:11px;color:#333;line-height:14px;letter-spacing:-0.1px">0</div>
<div style="position:absolute;left:1046px;top:628px;width:97px;text-align:center;white-space:nowrap;font-size:11px;color:#333;line-height:14px;letter-spacing:-0.1px">2</div>
<svg style="position:absolute;left:1177px;top:633px" width="8" height="7" viewBox="0 0 8 7"><path d="M0 5.7 L3.5 0 L7 5.7Z" fill="#3cb043"/><rect x="3" y="5" width="1" height="1.5" fill="#3cb043"/></svg>
<div style="position:absolute;left:1185px;top:629px;white-space:nowrap;font-size:10px;font-weight:bold;color:#2d6b2d;line-height:14px">2</div>
<div style="position:absolute;left:1224px;top:628px;width:106px;text-align:center;white-space:nowrap;font-size:11px;color:#333;line-height:14px;letter-spacing:-0.1px">24,700</div>
<div style="position:absolute;left:1331px;top:628px;width:106px;text-align:center;white-space:nowrap;font-size:11px;color:#333;line-height:14px;letter-spacing:-0.1px">28</div>
<svg style="position:absolute;left:19px;top:652px" width="18" height="23" viewBox="0 0 18 23"><path d="M4 0.9 H1.2 C0 0.9 0 4.5 1.5 6.5 C2.8 8 4.5 8.5 6.2 9" fill="none" stroke="#d0d0d0" stroke-width="1.8"/><path d="M13 0.9 H15.8 C17 0.9 17 4.5 15.5 6.5 C14.2 8 12.5 8.5 10.8 9" fill="none" stroke="#d0d0d0" stroke-width="1.8"/><path d="M3.4 0 H13.6 V3 C13.6 6.5 11 8.4 9.6 9.2 V9.8 H7.4 V9.2 C6 8.4 3.4 6.5 3.4 3Z" fill="#d0d0d0"/><path d="M4.6 0.5 H7.2 V8 C5.6 6.8 4.6 5 4.6 3.2Z" fill="#dedede"/><rect x="7.8" y="9" width="1.5" height="8" fill="#c8c8c8"/><rect x="7" y="12.8" width="3" height="0.9" fill="#c8c8c8"/><path d="M7.8 16.2 C7.8 18 6 18.8 4.8 19 H12.2 C11 18.8 9.3 18 9.3 16.2Z" fill="#c8c8c8"/><rect x="0.4" y="18.9" width="16.2" height="1.5" fill="#bdbdbd"/><rect x="1.5" y="20.6" width="14" height="0.8" fill="#e6e6e6"/></svg>
<div style="position:absolute;left:53px;top:656px;white-space:nowrap;font-size:11px;color:#333;line-height:14px;letter-spacing:-0.1px;letter-spacing:-0.2px">broward.org</div>
<svg style="position:absolute;left:818px;top:658px" width="11" height="11" viewBox="0 0 11 11"><path d="M0.5 1 V8.5 H6" fill="none" stroke="#b0b0b0" stroke-width="1"/><path d="M5 9.5 H9" fill="none" stroke="#bcbcbc" stroke-width="1"/><path d="M9.5 1.8 V8.5" fill="none" stroke="#b8b8b8" stroke-width="1"/><path d="M2 5.8 L8.6 0.9" stroke="#aaaaaa" stroke-width="1.3"/><path d="M5.8 0.5 H9.6 V3" fill="none" stroke="#aaaaaa" stroke-width="1"/></svg>
<div style="position:absolute;left:832px;top:656px;width:115px;text-align:center;white-space:nowrap;font-size:11px;color:#333;line-height:14px;letter-spacing:-0.1px">2</div>
<div style="position:absolute;left:948px;top:656px;width:97px;text-align:center;white-space:nowrap;font-size:11px;color:#333;line-height:14px;letter-spacing:-0.1px">0</div>
<div style="position:absolute;left:1046px;top:656px;width:97px;text-align:center;white-space:nowrap;font-size:11px;color:#333;line-height:14px;letter-spacing:-0.1px">2</div>
<svg style="position:absolute;left:1177px;top:661px" width="8" height="7" viewBox="0 0 8 7"><path d="M0 5.7 L3.5 0 L7 5.7Z" fill="#3cb043"/><rect x="3" y="5" width="1" height="1.5" fill="#3cb043"/></svg>
<div style="position:absolute;left:1185px;top:657px;white-space:nowrap;font-size:10px;font-weight:bold;color:#2d6b2d;line-height:14px">2</div>
<div style="position:absolute;left:1224px;top:656px;width:106px;text-align:center;white-space:nowrap;font-size:11px;color:#333;line-height:14px;letter-spacing:-0.1px">24,700</div>
<div style="position:absolute;left:1331px;top:656px;width:106px;text-align:center;white-space:nowrap;font-size:11px;color:#333;line-height:14px;letter-spacing:-0.1px">36</div>
<svg style="position:absolute;left:19px;top:680px" width="18" height="23" viewBox="0 0 18 23"><path d="M4 0.9 H1.2 C0 0.9 0 4.5 1.5 6.5 C2.8 8 4.5 8.5 6.2 9" fill="none" stroke="#d0d0d0" stroke-width="1.8"/><path d="M13 0.9 H15.8 C17 0.9 17 4.5 15.5 6.5 C14.2 8 12.5 8.5 10.8 9" fill="none" stroke="#d0d0d0" stroke-width="1.8"/><path d="M3.4 0 H13.6 V3 C13.6 6.5 11 8.4 9.6 9.2 V9.8 H7.4 V9.2 C6 8.4 3.4 6.5 3.4 3Z" fill="#d0d0d0"/><path d="M4.6 0.5 H7.2 V8 C5.6 6.8 4.6 5 4.6 3.2Z" fill="#dedede"/><rect x="7.8" y="9" width="1.5" height="8" fill="#c8c8c8"/><rect x="7" y="12.8" width="3" height="0.9" fill="#c8c8c8"/><path d="M7.8 16.2 C7.8 18 6 18.8 4.8 19 H12.2 C11 18.8 9.3 18 9.3 16.2Z" fill="#c8c8c8"/><rect x="0.4" y="18.9" width="16.2" height="1.5" fill="#bdbdbd"/><rect x="1.5" y="20.6" width="14" height="0.8" fill="#e6e6e6"/></svg>
<div style="position:absolute;left:53px;top:684px;white-space:nowrap;font-size:11px;color:#333;line-height:14px;letter-spacing:-0.1px;letter-spacing:-0.2px">goodreads.com</div>
<svg style="position:absolute;left:818px;top:686px" width="11" height="11" viewBox="0 0 11 11"><path d="M0.5 1 V8.5 H6" fill="none" stroke="#b0b0b0" stroke-width="1"/><path d="M5 9.5 H9" fill="none" stroke="#bcbcbc" stroke-width="1"/><path d="M9.5 1.8 V8.5" fill="none" stroke="#b8b8b8" stroke-width="1"/><path d="M2 5.8 L8.6 0.9" stroke="#aaaaaa" stroke-width="1.3"/><path d="M5.8 0.5 H9.6 V3" fill="none" stroke="#aaaaaa" stroke-width="1"/></svg>
<div style="position:absolute;left:832px;top:684px;width:115px;text-align:center;white-space:nowrap;font-size:11px;color:#333;line-height:14px;letter-spacing:-0.1px">2</div>
<div style="position:absolute;left:948px;top:684px;width:97px;text-align:center;white-space:nowrap;font-size:11px;color:#333;line-height:14px;letter-spacing:-0.1px">0</div>
<div style="position:absolute;left:1046px;top:684px;width:97px;text-align:center;white-space:nowrap;font-size:11px;color:#333;line-height:14px;letter-spacing:-0.1px">2</div>
<svg style="position:absolute;left:1177px;top:689px" width="8" height="7" viewBox="0 0 8 7"><path d="M0 5.7 L3.5 0 L7 5.7Z" fill="#3cb043"/><rect x="3" y="5" width="1" height="1.5" fill="#3cb043"/></svg>
<div style="position:absolute;left:1185px;top:685px;white-space:nowrap;font-size:10px;font-weight:bold;color:#2d6b2d;line-height:14px">2</div>
<div style="position:absolute;left:1224px;top:684px;width:106px;text-align:center;white-space:nowrap;font-size:11px;color:#333;line-height:14px;letter-spacing:-0.1px">24,700</div>
<div style="position:absolute;left:1331px;top:684px;width:106px;text-align:center;white-space:nowrap;font-size:11px;color:#333;line-height:14px;letter-spacing:-0.1px">32</div>
<svg style="position:absolute;left:19px;top:708px" width="18" height="23" viewBox="0 0 18 23"><path d="M4 0.9 H1.2 C0 0.9 0 4.5 1.5 6.5 C2.8 8 4.5 8.5 6.2 9" fill="none" stroke="#d0d0d0" stroke-width="1.8"/><path d="M13 0.9 H15.8 C17 0.9 17 4.5 15.5 6.5 C14.2 8 12.5 8.5 10.8 9" fill="none" stroke="#d0d0d0" stroke-width="1.8"/><path d="M3.4 0 H13.6 V3 C13.6 6.5 11 8.4 9.6 9.2 V9.8 H7.4 V9.2 C6 8.4 3.4 6.5 3.4 3Z" fill="#d0d0d0"/><path d="M4.6 0.5 H7.2 V8 C5.6 6.8 4.6 5 4.6 3.2Z" fill="#dedede"/><rect x="7.8" y="9" width="1.5" height="8" fill="#c8c8c8"/><rect x="7" y="12.8" width="3" height="0.9" fill="#c8c8c8"/><path d="M7.8 16.2 C7.8 18 6 18.8 4.8 19 H12.2 C11 18.8 9.3 18 9.3 16.2Z" fill="#c8c8c8"/><rect x="0.4" y="18.9" width="16.2" height="1.5" fill="#bdbdbd"/><rect x="1.5" y="20.6" width="14" height="0.8" fill="#e6e6e6"/></svg>
<div style="position:absolute;left:53px;top:712px;white-space:nowrap;font-size:11px;color:#333;line-height:14px;letter-spacing:-0.1px;letter-spacing:-0.2px">forbes.com</div>
<svg style="position:absolute;left:818px;top:714px" width="11" height="11" viewBox="0 0 11 11"><path d="M0.5 1 V8.5 H6" fill="none" stroke="#b0b0b0" stroke-width="1"/><path d="M5 9.5 H9" fill="none" stroke="#bcbcbc" stroke-width="1"/><path d="M9.5 1.8 V8.5" fill="none" stroke="#b8b8b8" stroke-width="1"/><path d="M2 5.8 L8.6 0.9" stroke="#aaaaaa" stroke-width="1.3"/><path d="M5.8 0.5 H9.6 V3" fill="none" stroke="#aaaaaa" stroke-width="1"/></svg>
<div style="position:absolute;left:832px;top:712px;width:115px;text-align:center;white-space:nowrap;font-size:11px;color:#333;line-height:14px;letter-spacing:-0.1px">2</div>
<div style="position:absolute;left:948px;top:712px;width:97px;text-align:center;white-space:nowrap;font-size:11px;color:#333;line-height:14px;letter-spacing:-0.1px">0</div>
<div style="position:absolute;left:1046px;top:712px;width:97px;text-align:center;white-space:nowrap;font-size:11px;color:#333;line-height:14px;letter-spacing:-0.1px">2</div>
<svg style="position:absolute;left:1177px;top:717px" width="8" height="7" viewBox="0 0 8 7"><path d="M0 5.7 L3.5 0 L7 5.7Z" fill="#3cb043"/><rect x="3" y="5" width="1" height="1.5" fill="#3cb043"/></svg>
<div style="position:absolute;left:1185px;top:713px;white-space:nowrap;font-size:10px;font-weight:bold;color:#2d6b2d;line-height:14px">2</div>
<div style="position:absolute;left:1224px;top:712px;width:106px;text-align:center;white-space:nowrap;font-size:11px;color:#333;line-height:14px;letter-spacing:-0.1px">24,700</div>
<div style="position:absolute;left:1331px;top:712px;width:106px;text-align:center;white-space:nowrap;font-size:11px;color:#333;line-height:14px;letter-spacing:-0.1px">33</div>
<svg style="position:absolute;left:19px;top:736px" width="18" height="23" viewBox="0 0 18 23"><path d="M4 0.9 H1.2 C0 0.9 0 4.5 1.5 6.5 C2.8 8 4.5 8.5 6.2 9" fill="none" stroke="#d0d0d0" stroke-width="1.8"/><path d="M13 0.9 H15.8 C17 0.9 17 4.5 15.5 6.5 C14.2 8 12.5 8.5 10.8 9" fill="none" stroke="#d0d0d0" stroke-width="1.8"/><path d="M3.4 0 H13.6 V3 C13.6 6.5 11 8.4 9.6 9.2 V9.8 H7.4 V9.2 C6 8.4 3.4 6.5 3.4 3Z" fill="#d0d0d0"/><path d="M4.6 0.5 H7.2 V8 C5.6 6.8 4.6 5 4.6 3.2Z" fill="#dedede"/><rect x="7.8" y="9" width="1.5" height="8" fill="#c8c8c8"/><rect x="7" y="12.8" width="3" height="0.9" fill="#c8c8c8"/><path d="M7.8 16.2 C7.8 18 6 18.8 4.8 19 H12.2 C11 18.8 9.3 18 9.3 16.2Z" fill="#c8c8c8"/><rect x="0.4" y="18.9" width="16.2" height="1.5" fill="#bdbdbd"/><rect x="1.5" y="20.6" width="14" height="0.8" fill="#e6e6e6"/></svg>
<div style="position:absolute;left:53px;top:740px;white-space:nowrap;font-size:11px;color:#333;line-height:14px;letter-spacing:-0.1px;letter-spacing:-0.2px">alisweb.org</div>
<svg style="position:absolute;left:818px;top:742px" width="11" height="11" viewBox="0 0 11 11"><path d="M0.5 1 V8.5 H6" fill="none" stroke="#b0b0b0" stroke-width="1"/><path d="M5 9.5 H9" fill="none" stroke="#bcbcbc" stroke-width="1"/><path d="M9.5 1.8 V8.5" fill="none" stroke="#b8b8b8" stroke-width="1"/><path d="M2 5.8 L8.6 0.9" stroke="#aaaaaa" stroke-width="1.3"/><path d="M5.8 0.5 H9.6 V3" fill="none" stroke="#aaaaaa" stroke-width="1"/></svg>
<div style="position:absolute;left:832px;top:740px;width:115px;text-align:center;white-space:nowrap;font-size:11px;color:#333;line-height:14px;letter-spacing:-0.1px">2</div>
<div style="position:absolute;left:948px;top:740px;width:97px;text-align:center;white-space:nowrap;font-size:11px;color:#333;line-height:14px;letter-spacing:-0.1px">0</div>
<div style="position:absolute;left:1046px;top:740px;width:97px;text-align:center;white-space:nowrap;font-size:11px;color:#333;line-height:14px;letter-spacing:-0.1px">2</div>
<svg style="position:absolute;left:1177px;top:745px" width="8" height="7" viewBox="0 0 8 7"><path d="M0 5.7 L3.5 0 L7 5.7Z" fill="#3cb043"/><rect x="3" y="5" width="1" height="1.5" fill="#3cb043"/></svg>
<div style="position:absolute;left:1185px;top:741px;white-space:nowrap;font-size:10px;font-weight:bold;color:#2d6b2d;line-height:14px">2</div>
<div style="position:absolute;left:1224px;top:740px;width:106px;text-align:center;white-space:nowrap;font-size:11px;color:#333;line-height:14px;letter-spacing:-0.1px">24,700</div>
<div style="position:absolute;left:1331px;top:740px;width:106px;text-align:center;white-space:nowrap;font-size:11px;color:#333;line-height:14px;letter-spacing:-0.1px">28</div>
<svg style="position:absolute;left:19px;top:764px" width="18" height="23" viewBox="0 0 18 23"><path d="M4 0.9 H1.2 C0 0.9 0 4.5 1.5 6.5 C2.8 8 4.5 8.5 6.2 9" fill="none" stroke="#f2c036" stroke-width="1.8"/><path d="M13 0.9 H15.8 C17 0.9 17 4.5 15.5 6.5 C14.2 8 12.5 8.5 10.8 9" fill="none" stroke="#f2c036" stroke-width="1.8"/><path d="M3.4 0 H13.6 V3 C13.6 6.5 11 8.4 9.6 9.2 V9.8 H7.4 V9.2 C6 8.4 3.4 6.5 3.4 3Z" fill="#f2c036"/><path d="M4.6 0.5 H7.2 V8 C5.6 6.8 4.6 5 4.6 3.2Z" fill="#fbd56a"/><rect x="7.8" y="9" width="1.5" height="8" fill="#e8b11e"/><rect x="7" y="12.8" width="3" height="0.9" fill="#e8b11e"/><path d="M7.8 16.2 C7.8 18 6 18.8 4.8 19 H12.2 C11 18.8 9.3 18 9.3 16.2Z" fill="#e8b11e"/><rect x="0.4" y="18.9" width="16.2" height="1.5" fill="#a9a9b2"/><rect x="1.5" y="20.6" width="14" height="0.8" fill="#f6d67e"/></svg>
<div style="position:absolute;left:53px;top:768px;white-space:nowrap;font-size:11px;color:#333;line-height:14px;letter-spacing:-0.1px;letter-spacing:-0.2px">nytimes.com</div>
<svg style="position:absolute;left:818px;top:770px" width="11" height="11" viewBox="0 0 11 11"><path d="M0.5 1 V8.5 H6" fill="none" stroke="#b0b0b0" stroke-width="1"/><path d="M5 9.5 H9" fill="none" stroke="#bcbcbc" stroke-width="1"/><path d="M9.5 1.8 V8.5" fill="none" stroke="#b8b8b8" stroke-width="1"/><path d="M2 5.8 L8.6 0.9" stroke="#aaaaaa" stroke-width="1.3"/><path d="M5.8 0.5 H9.6 V3" fill="none" stroke="#aaaaaa" stroke-width="1"/></svg>
<div style="position:absolute;left:832px;top:768px;width:115px;text-align:center;white-space:nowrap;font-size:11px;color:#333;line-height:14px;letter-spacing:-0.1px">2</div>
<div style="position:absolute;left:948px;top:768px;width:97px;text-align:center;white-space:nowrap;font-size:11px;color:#333;line-height:14px;letter-spacing:-0.1px">2</div>
<div style="position:absolute;left:1046px;top:768px;width:97px;text-align:center;white-space:nowrap;font-size:11px;color:#333;line-height:14px;letter-spacing:-0.1px">0</div>
<svg style="position:absolute;left:1177px;top:773px" width="9" height="7" viewBox="0 0 9 7"><path d="M0 0 H8 L4 5Z" fill="#c0385a"/><rect x="0" y="6" width="8" height="1" fill="#c0385a"/></svg>
<div style="position:absolute;left:1185px;top:769px;white-space:nowrap;font-size:10px;color:#b01e40;line-height:14px">2</div>
<div style="position:absolute;left:1224px;top:768px;width:106px;text-align:center;white-space:nowrap;font-size:11px;color:#333;line-height:14px;letter-spacing:-0.1px">24,700</div>
<div style="position:absolute;left:1331px;top:768px;width:106px;text-align:center;white-space:nowrap;font-size:11px;color:#333;line-height:14px;letter-spacing:-0.1px">60</div>
<svg style="position:absolute;left:19px;top:792px" width="18" height="23" viewBox="0 0 18 23"><path d="M4 0.9 H1.2 C0 0.9 0 4.5 1.5 6.5 C2.8 8 4.5 8.5 6.2 9" fill="none" stroke="#d0d0d0" stroke-width="1.8"/><path d="M13 0.9 H15.8 C17 0.9 17 4.5 15.5 6.5 C14.2 8 12.5 8.5 10.8 9" fill="none" stroke="#d0d0d0" stroke-width="1.8"/><path d="M3.4 0 H13.6 V3 C13.6 6.5 11 8.4 9.6 9.2 V9.8 H7.4 V9.2 C6 8.4 3.4 6.5 3.4 3Z" fill="#d0d0d0"/><path d="M4.6 0.5 H7.2 V8 C5.6 6.8 4.6 5 4.6 3.2Z" fill="#dedede"/><rect x="7.8" y="9" width="1.5" height="8" fill="#c8c8c8"/><rect x="7" y="12.8" width="3" height="0.9" fill="#c8c8c8"/><path d="M7.8 16.2 C7.8 18 6 18.8 4.8 19 H12.2 C11 18.8 9.3 18 9.3 16.2Z" fill="#c8c8c8"/><rect x="0.4" y="18.9" width="16.2" height="1.5" fill="#bdbdbd"/><rect x="1.5" y="20.6" width="14" height="0.8" fill="#e6e6e6"/></svg>
<div style="position:absolute;left:53px;top:796px;white-space:nowrap;font-size:11px;color:#333;line-height:14px;letter-spacing:-0.1px;letter-spacing:-0.2px">money.cnn.com</div>
<svg style="position:absolute;left:818px;top:798px" width="11" height="11" viewBox="0 0 11 11"><path d="M0.5 1 V8.5 H6" fill="none" stroke="#b0b0b0" stroke-width="1"/><path d="M5 9.5 H9" fill="none" stroke="#bcbcbc" stroke-width="1"/><path d="M9.5 1.8 V8.5" fill="none" stroke="#b8b8b8" stroke-width="1"/><path d="M2 5.8 L8.6 0.9" stroke="#aaaaaa" stroke-width="1.3"/><path d="M5.8 0.5 H9.6 V3" fill="none" stroke="#aaaaaa" stroke-width="1"/></svg>
<div style="position:absolute;left:832px;top:796px;width:115px;text-align:center;white-space:nowrap;font-size:11px;color:#333;line-height:14px;letter-spacing:-0.1px">2</div>
<div style="position:absolute;left:948px;top:796px;width:97px;text-align:center;white-space:nowrap;font-size:11px;color:#333;line-height:14px;letter-spacing:-0.1px">0</div>
<div style="position:absolute;left:1046px;top:796px;width:97px;text-align:center;white-space:nowrap;font-size:11px;color:#333;line-height:14px;letter-spacing:-0.1px">2</div>
<svg style="position:absolute;left:1177px;top:801px" width="8" height="7" viewBox="0 0 8 7"><path d="M0 5.7 L3.5 0 L7 5.7Z" fill="#3cb043"/><rect x="3" y="5" width="1" height="1.5" fill="#3cb043"/></svg>
<div style="position:absolute;left:1185px;top:797px;white-space:nowrap;font-size:10px;font-weight:bold;color:#2d6b2d;line-height:14px">2</div>
<div style="position:absolute;left:1224px;top:796px;width:106px;text-align:center;white-space:nowrap;font-size:11px;color:#333;line-height:14px;letter-spacing:-0.1px">24,700</div>
<div style="position:absolute;left:1331px;top:796px;width:106px;text-align:center;white-space:nowrap;font-size:11px;color:#333;line-height:14px;letter-spacing:-0.1px">39</div>
</body></html>
